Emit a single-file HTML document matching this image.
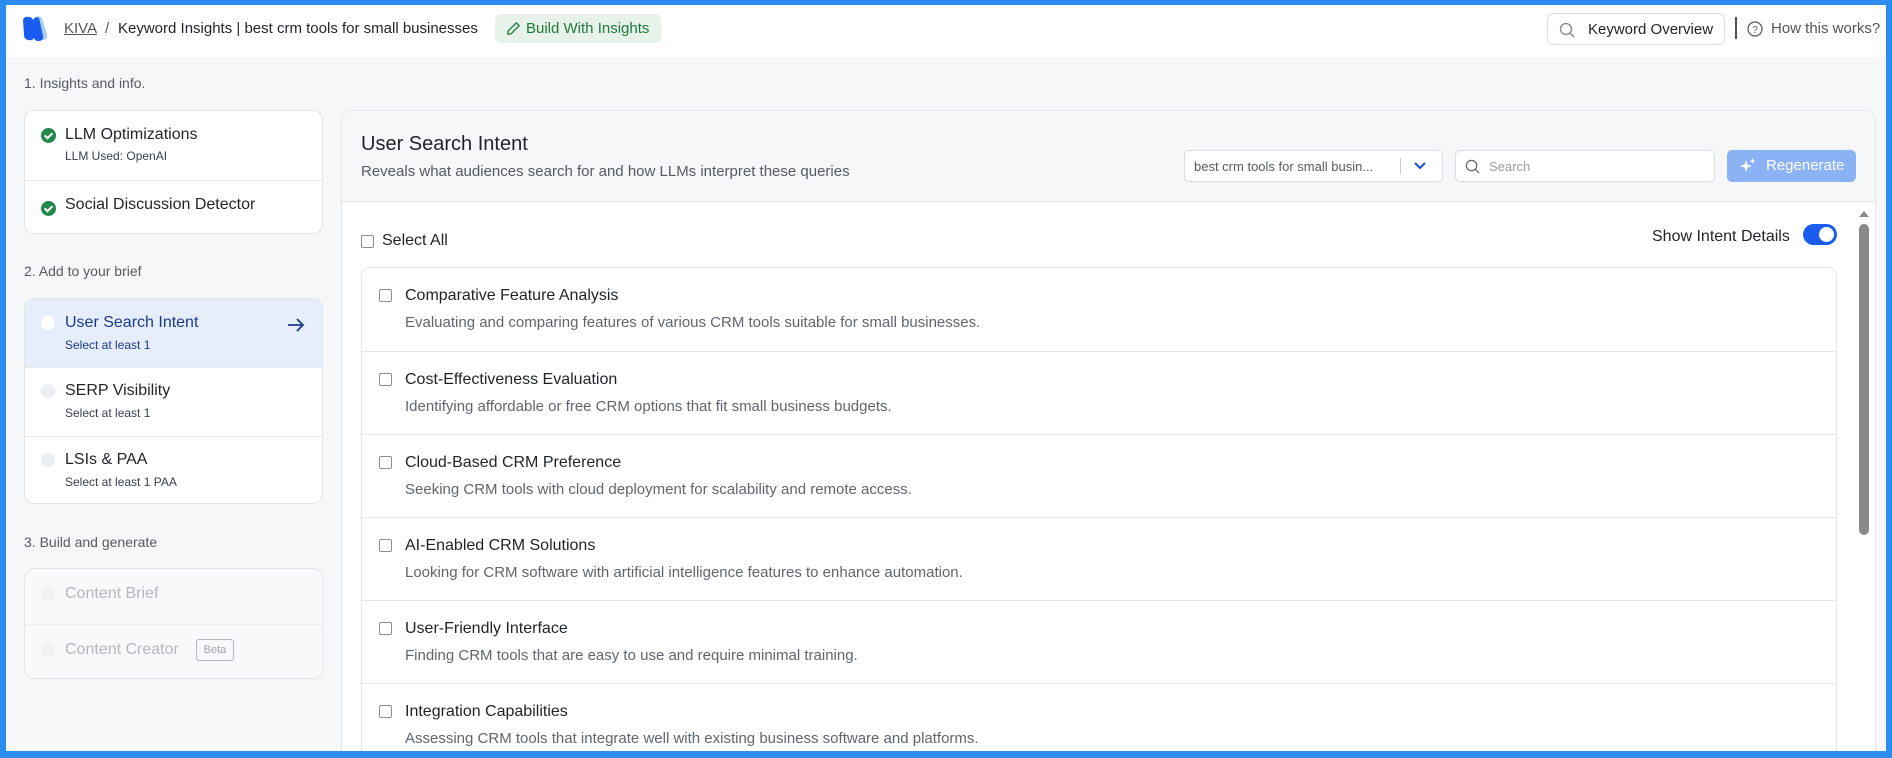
<!DOCTYPE html>
<html><head><meta charset="utf-8"><style>
*{box-sizing:border-box;margin:0;padding:0}
body{width:1892px;height:758px;overflow:hidden;background:#2d8cf0;font-family:"Liberation Sans",sans-serif;color:#1f2328;position:relative}
.frame{position:absolute;left:6px;top:5px;right:6px;bottom:7px;background:#f6f7f9;overflow:hidden}
.hdr{position:absolute;left:0;top:0;right:0;height:52px;background:#fff}
.abs{position:absolute}
.sec{position:absolute;left:18px;font-size:14px;color:#555b63}
.card{position:absolute;left:18px;width:299px;background:#fff;border:1px solid #e3e5e8;border-radius:10px;overflow:hidden}
.row{position:absolute;left:0;right:0;border-top:1px solid #e5e7eb}
.row .t{position:absolute;left:40px;font-size:16px;color:#1f2328}
.row .s{position:absolute;left:40px;font-size:12px;color:#374151}
.dot{position:absolute;left:16px;width:14px;height:14px;border-radius:50%;background:#eceef1}
.chk{position:absolute;left:16px;width:15px;height:15px;border-radius:50%;background:#1f8a4c}
.chk:after{content:"";position:absolute;left:5px;top:2.5px;width:3px;height:6px;border:solid #fff;border-width:0 2px 2px 0;transform:rotate(45deg)}
.cb{position:absolute;width:13px;height:13px;border:1px solid #8a8f96;border-radius:2px;background:#fff}
.item{position:absolute;left:0;right:0;height:83px;border-top:1px solid #e5e7eb}
.item .t{position:absolute;left:43px;top:19px;font-size:16px;color:#1f2328}
.item .d{position:absolute;left:43px;top:46px;font-size:15px;color:#5f6670}
.item .cb{left:17px;top:21px}
</style></head><body>
<div class="frame">
<div class="hdr">
 <svg class="abs" style="left:13px;top:9px" width="30" height="30" viewBox="0 0 30 30"><path d="M16 3 Q20 1 23 4 L28 20 Q29 26 23 26 Z" fill="#a9cdfc"/><path d="M4 6 Q5 2 10 3 Q13 3 14 6 Q16 2 20 4 L24 22 Q25 27 19 27 Q16 27 15 24 Q13 27 9 26 Q5 25 5 21 Z" fill="#1a5cf0"/></svg>
 <div class="abs" style="left:58px;top:15px;font-size:15px;color:#555;text-decoration:underline">KIVA</div>
 <div class="abs" style="left:99px;top:15px;font-size:15px;color:#555">/</div>
 <div class="abs" style="left:112px;top:15px;font-size:15px;color:#1f2328;font-weight:500">Keyword Insights | best crm tools for small businesses</div>
 <div class="abs" style="left:489px;top:9px;width:166px;height:29px;background:#e7f3ea;border-radius:6px;font-size:15px;color:#1f7a3a;padding:6px 0 0 31px">Build With Insights</div>
 <svg class="abs" style="left:500px;top:16px" width="15" height="15" viewBox="0 0 16 16"><path d="M11 2 L14 5 L5 14 L2 14 L2 11 Z" fill="none" stroke="#1f7a3a" stroke-width="1.4"/></svg>
 <div class="abs" style="left:1541px;top:8px;width:178px;height:32px;border:1px solid #d9dce0;border-radius:6px;background:#fff;font-size:15px;padding:7px 0 0 40px">Keyword Overview</div>
 <svg class="abs" style="left:1553px;top:17px" width="16" height="16" viewBox="0 0 16 16"><circle cx="7" cy="7" r="5.5" fill="none" stroke="#888" stroke-width="1.3"/><path d="M11 11 L15 15" stroke="#888" stroke-width="1.3"/></svg>
 <div class="abs" style="left:1729px;top:12px;width:2px;height:22px;background:#555"></div>
 <svg class="abs" style="left:1741px;top:16px" width="16" height="16" viewBox="0 0 16 16"><circle cx="8" cy="8" r="7" fill="none" stroke="#555" stroke-width="1.2"/><text x="8" y="12" font-size="10" text-anchor="middle" fill="#555" font-family="Liberation Sans">?</text></svg>
 <div class="abs" style="left:1765px;top:15px;font-size:15px;color:#555">How this works?</div>
</div>

<div class="sec" style="top:70px">1. Insights and info.</div>
<div class="card" style="top:105px;height:124px">
 <div class="row" style="top:0;height:69px;border-top:none"><div class="chk" style="top:17px"></div><div class="t" style="top:15px">LLM Optimizations</div><div class="s" style="top:38px">LLM Used: OpenAI</div></div>
 <div class="row" style="top:69px;height:55px"><div class="chk" style="top:20px"></div><div class="t" style="top:15px">Social Discussion Detector</div></div>
</div>

<div class="sec" style="top:258px">2. Add to your brief</div>
<div class="card" style="top:293px;height:206px">
 <div class="row" style="top:0;height:68px;border-top:none;background:#e6eefc"><div class="dot" style="top:17px;background:#fff"></div><div class="t" style="top:15px;color:#1a3a8a">User Search Intent</div><div class="s" style="top:39px;color:#1a3a8a">Select at least 1</div>
 <svg class="abs" style="left:261px;top:17px" width="20" height="18" viewBox="0 0 20 18"><path d="M2 9 H17 M11 3 L17 9 L11 15" fill="none" stroke="#1a3a8a" stroke-width="1.8"/></svg></div>
 <div class="row" style="top:68px;height:69px"><div class="dot" style="top:16px"></div><div class="t" style="top:14px">SERP Visibility</div><div class="s" style="top:38px">Select at least 1</div></div>
 <div class="row" style="top:137px;height:69px"><div class="dot" style="top:16px"></div><div class="t" style="top:14px">LSIs &amp; PAA</div><div class="s" style="top:38px">Select at least 1 PAA</div></div>
</div>

<div class="sec" style="top:529px">3. Build and generate</div>
<div class="card" style="top:563px;height:111px;background:#f8f9fa">
 <div class="row" style="top:0;height:55px;border-top:none"><div class="dot" style="top:18px;background:#f0f1f3"></div><div class="t" style="top:16px;color:#b4b8be">Content Brief</div></div>
 <div class="row" style="top:55px;height:56px;border-top:1px solid #eceef0"><div class="dot" style="top:18px;background:#f0f1f3"></div><div class="t" style="top:16px;color:#b4b8be">Content Creator</div>
 <div class="abs" style="left:171px;top:14px;width:38px;height:22px;border:1px solid #b4b8be;border-radius:3px;font-size:11px;color:#a0a4aa;text-align:center;line-height:20px">Beta</div></div>
</div>

<div class="abs" style="left:335px;top:105px;width:1535px;height:660px;background:#fff;border:1px solid #e3e5e8;border-radius:10px;overflow:hidden">
 <div class="abs" style="left:0;top:0;right:0;height:91px;background:#f6f7f9;border-bottom:1px solid #e3e5e8"></div>
 <div class="abs" style="left:19px;top:22px;font-size:20px;font-weight:500">User Search Intent</div>
 <div class="abs" style="left:19px;top:52px;font-size:15px;color:#555b63">Reveals what audiences search for and how LLMs interpret these queries</div>
 <div class="abs" style="left:842px;top:39px;width:259px;height:32px;background:#fff;border:1px solid #d9dce0;border-radius:5px;font-size:13px;color:#555b63;padding:8px 0 0 9px">best crm tools for small busin...</div>
 <div class="abs" style="left:1058px;top:47px;width:1px;height:16px;background:#ccc"></div>
 <svg class="abs" style="left:1072px;top:50px" width="12" height="10" viewBox="0 0 12 10"><path d="M1 2 L6 7 L11 2" fill="none" stroke="#1a4fd0" stroke-width="2"/></svg>
 <div class="abs" style="left:1113px;top:39px;width:260px;height:32px;background:#fff;border:1px solid #d9dce0;border-radius:5px;font-size:13px;color:#9aa0a6;padding:8px 0 0 33px">Search</div>
 <svg class="abs" style="left:1123px;top:48px" width="15" height="15" viewBox="0 0 16 16"><circle cx="7" cy="7" r="5.5" fill="none" stroke="#666" stroke-width="1.3"/><path d="M11 11 L15 15" stroke="#666" stroke-width="1.3"/></svg>
 <div class="abs" style="left:1385px;top:39px;width:129px;height:32px;background:#8cb2f6;border-radius:5px;font-size:15px;color:#fff;padding:7px 0 0 39px">Regenerate</div>
 <svg class="abs" style="left:1397px;top:46px" width="18" height="18" viewBox="0 0 18 18"><path d="M7 3 L8.5 7.5 L13 9 L8.5 10.5 L7 15 L5.5 10.5 L1 9 L5.5 7.5 Z M13.5 1 L14.3 3.2 L16.5 4 L14.3 4.8 L13.5 7 L12.7 4.8 L10.5 4 L12.7 3.2Z" fill="#fff"/></svg>

 <div class="cb" style="left:19px;top:124px"></div>
 <div class="abs" style="left:40px;top:121px;font-size:16px">Select All</div>
 <div class="abs" style="left:1310px;top:117px;font-size:16px">Show Intent Details</div>
 <div class="abs" style="left:1461px;top:113px;width:34px;height:21px;border-radius:11px;background:#1a5cf0"><div style="position:absolute;right:3px;top:3px;width:15px;height:15px;border-radius:50%;background:#fff"></div></div>
 <svg class="abs" style="left:1516px;top:98px" width="12" height="10" viewBox="0 0 12 10"><path d="M1 8 L6 2 L11 8Z" fill="#888"/></svg>
 <div class="abs" style="left:1517px;top:113px;width:10px;height:311px;border-radius:5px;background:#8a8a8a"></div>

 <div class="abs" style="left:19px;top:156px;width:1476px;height:520px;border:1px solid #e3e5e8;border-radius:8px;overflow:hidden">
  <div class="item" style="top:0;border-top:none"><div class="cb"></div><div class="t">Comparative Feature Analysis</div><div class="d">Evaluating and comparing features of various CRM tools suitable for small businesses.</div></div>
  <div class="item" style="top:83px"><div class="cb"></div><div class="t">Cost-Effectiveness Evaluation</div><div class="d">Identifying affordable or free CRM options that fit small business budgets.</div></div>
  <div class="item" style="top:166px"><div class="cb"></div><div class="t">Cloud-Based CRM Preference</div><div class="d">Seeking CRM tools with cloud deployment for scalability and remote access.</div></div>
  <div class="item" style="top:249px"><div class="cb"></div><div class="t">AI-Enabled CRM Solutions</div><div class="d">Looking for CRM software with artificial intelligence features to enhance automation.</div></div>
  <div class="item" style="top:332px"><div class="cb"></div><div class="t">User-Friendly Interface</div><div class="d">Finding CRM tools that are easy to use and require minimal training.</div></div>
  <div class="item" style="top:415px"><div class="cb"></div><div class="t">Integration Capabilities</div><div class="d">Assessing CRM tools that integrate well with existing business software and platforms.</div></div>
 </div>
</div>
</div>
</body></html>
